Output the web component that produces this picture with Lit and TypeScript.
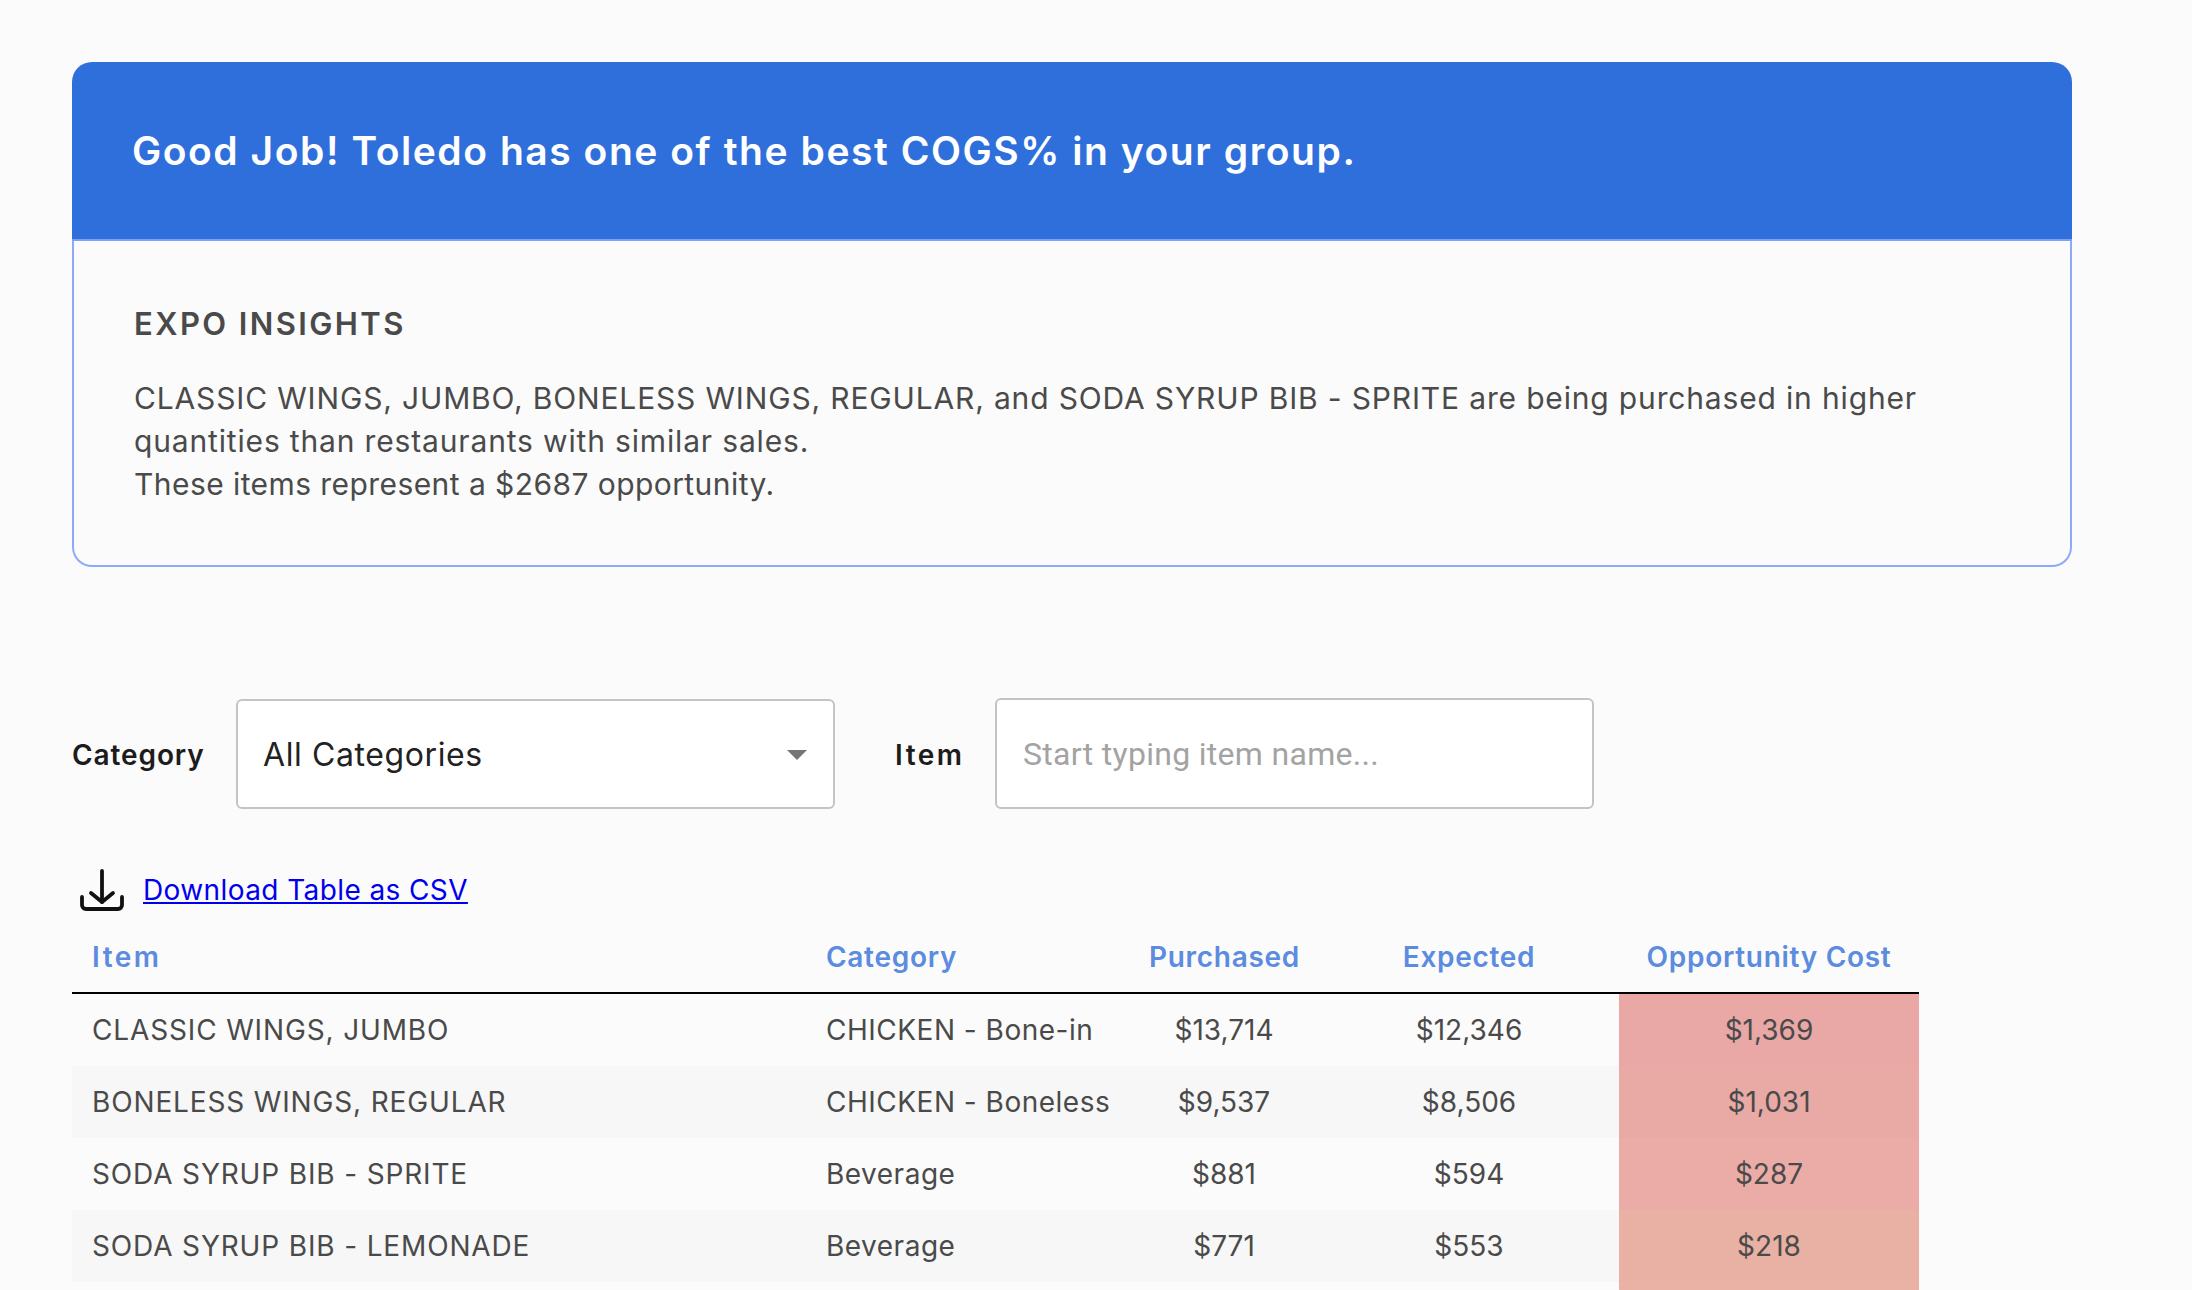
import { css, html, LitElement } from "lit";
import { customElement } from "lit/decorators.js";

const rows = [
	{ item: "CLASSIC WINGS, JUMBO", category: "CHICKEN - Bone-in", purchased: "$13,714", expected: "$12,346", cost: "$1,369", tint: "#e9a7a5" },
	{ item: "BONELESS WINGS, REGULAR", category: "CHICKEN - Boneless", purchased: "$9,537", expected: "$8,506", cost: "$1,031", tint: "#e9a9a5" },
	{ item: "SODA SYRUP BIB - SPRITE", category: "Beverage", purchased: "$881", expected: "$594", cost: "$287", tint: "#ebaca8" },
	{ item: "SODA SYRUP BIB - LEMONADE", category: "Beverage", purchased: "$771", expected: "$553", cost: "$218", tint: "#e9b0a4" },
];

@customElement("app-root")
export class AppRoot extends LitElement {
	static styles = css`
		:host {
			display: block;
			min-height: 1290px;
			box-sizing: border-box;
			padding: 62px 0 0 72px;
			background: #fbfbfb;
			font-family: Inter, "Liberation Sans", sans-serif;
			color: #4a4a4a;
		}

		.card {
			width: 2000px;
		}

		.banner {
			box-sizing: border-box;
			height: 179px;
			display: flex;
			align-items: center;
			padding: 0 60px;
			background: #2f6fdc;
			border-bottom: 2px solid #7fa0f5;
			border-radius: 20px 20px 0 0;
			color: #fff;
			font-size: 39px;
			font-weight: 600;
			letter-spacing: 1.55px;
		}

		.insights {
			box-sizing: border-box;
			height: 326px;
			padding: 62px 60px 0;
			border: 2px solid #8ea9f7;
			border-top: none;
			border-radius: 0 0 20px 20px;
		}

		.insights h2 {
			margin: 0 0 32px;
			font-size: 31px;
			line-height: 42px;
			font-weight: 600;
			letter-spacing: 2.4px;
		}

		.insights p {
			margin: 0;
			font-size: 30px;
			line-height: 43px;
			letter-spacing: 0.84px;
		}

		.insights .closing {
			letter-spacing: 0.43px;
		}

		.filters {
			display: flex;
			align-items: center;
			height: 111px;
			margin-top: 131px;
			color: #1c1c1c;
			font-size: 28px;
			font-weight: 600;
		}

		.label {
			width: 164px;
			padding-top: 3px;
			letter-spacing: 0.9px;
		}

		.label.item {
			width: 100px;
			margin-left: 60px;
			letter-spacing: 2.5px;
		}

		.select,
		input {
			box-sizing: border-box;
			width: 599px;
			border: 2px solid #c4c4c4;
			border-radius: 6px;
			background: #fff;
		}

		.select {
			height: 110px;
			display: flex;
			align-items: center;
			justify-content: space-between;
			padding: 2px 26px 0 25px;
			font-size: 32px;
			font-weight: 400;
			letter-spacing: 0.6px;
			color: #222;
		}

		.arrow {
			width: 0;
			height: 0;
			border-left: 10px solid transparent;
			border-right: 10px solid transparent;
			border-top: 10px solid #757575;
		}

		input {
			height: 111px;
			padding: 0 26px;
			font-family: Roboto, sans-serif;
			font-size: 32px;
			letter-spacing: 0.3px;
			outline: none;
		}

		input::placeholder {
			color: #a3a3a3;
		}

		.download {
			display: flex;
			align-items: center;
			gap: 18px;
			height: 46px;
			margin: 58px 0 0 7px;
		}

		.download svg {
			display: block;
			flex: none;
		}

		.download a {
			color: #0000ee;
			font-size: 28px;
			letter-spacing: 0.4px;
		}

		table {
			width: 1847px;
			margin-top: 9px;
			border-collapse: separate;
			border-spacing: 0;
			table-layout: fixed;
			font-size: 28px;
		}

		th {
			height: 72px;
			padding: 0 20px;
			border-bottom: 2px solid #000;
			color: #5b8ce0;
			font-weight: 600;
			letter-spacing: 0.7px;
			text-align: center;
			box-sizing: border-box;
		}

		th.item {
			letter-spacing: 2.5px;
		}

		td {
			height: 72px;
			padding: 0 20px;
			text-align: center;
			white-space: nowrap;
			box-sizing: border-box;
		}

		.left {
			text-align: left;
		}

		td.name {
			letter-spacing: 0.85px;
		}

		td.group {
			letter-spacing: 0.5px;
		}

		tbody tr:nth-child(even) {
			background: #f7f7f7;
		}

		tr.tail td {
			height: 8px;
			padding: 0;
		}
	`;

	render() {
		return html`
			<div class="card">
				<div class="banner">Good Job! Toledo has one of the best COGS% in your group.</div>
				<div class="insights">
					<h2>EXPO INSIGHTS</h2>
					<p>
						CLASSIC WINGS, JUMBO, BONELESS WINGS, REGULAR, and SODA SYRUP BIB - SPRITE are being purchased in higher<br />
						quantities than restaurants with similar sales.<br />
						<span class="closing">These items represent a $2687 opportunity.</span>
					</p>
				</div>
			</div>

			<div class="filters">
				<span class="label">Category</span>
				<div class="select">All Categories<span class="arrow"></span></div>
				<span class="label item">Item</span>
				<input type="text" placeholder="Start typing item name..." />
			</div>

			<div class="download">
				<svg width="46" height="44" viewBox="0 0 46 44" fill="none" stroke="#111" stroke-width="3.8" stroke-linecap="round" stroke-linejoin="round">
					<path d="M23 3v31" />
					<path d="M12 25l11 9 11-9" />
					<path d="M3 29v8a4 4 0 0 0 4 4h32a4 4 0 0 0 4-4v-8" />
				</svg>
				<a href="#">Download Table as CSV</a>
			</div>

			<table>
				<colgroup>
					<col style="width:734px" />
					<col style="width:323px" />
					<col style="width:190px" />
					<col style="width:300px" />
					<col style="width:300px" />
				</colgroup>
				<thead>
					<tr>
						<th class="left item">Item</th>
						<th class="left">Category</th>
						<th>Purchased</th>
						<th>Expected</th>
						<th>Opportunity Cost</th>
					</tr>
				</thead>
				<tbody>
					${rows.map(
						(r) => html`
							<tr>
								<td class="left name">${r.item}</td>
								<td class="left group">${r.category}</td>
								<td>${r.purchased}</td>
								<td>${r.expected}</td>
								<td style="background:${r.tint}">${r.cost}</td>
							</tr>
						`
					)}
					<tr class="tail">
						<td colspan="4"></td>
						<td style="background:#e9b2a5"></td>
					</tr>
				</tbody>
			</table>
		`;
	}
}
